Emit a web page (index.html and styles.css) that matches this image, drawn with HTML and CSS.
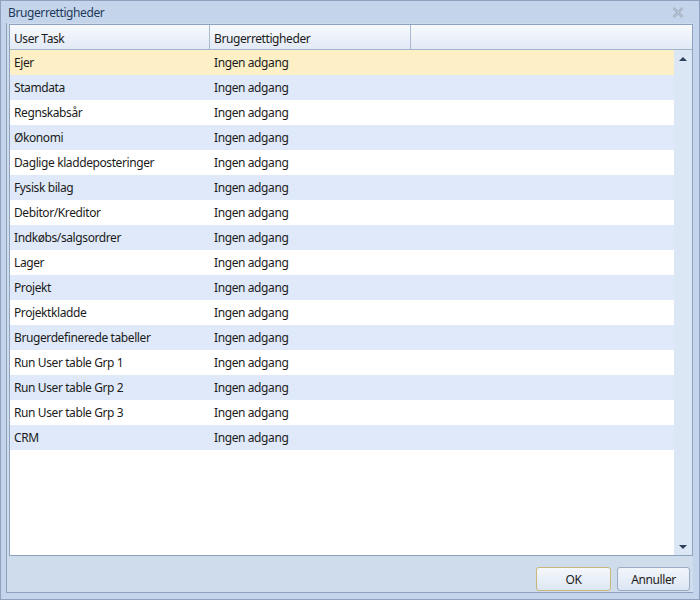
FILE: index.html
```html
<!DOCTYPE html>
<html lang="da">
<head>
  <meta charset="UTF-8" />
  <title>Brugerrettigheder</title>
  <link rel="stylesheet" href="styles.css">
</head>
<body>
  <div class="window">
    <div class="titlebar">
      <span class="title">Brugerrettigheder</span>
      <span class="close">
        <svg width="12" height="11" viewBox="0 0 12 11">
          <path d="M1.5 1 L10.5 10 M10.5 1 L1.5 10" stroke="#8d9bb0" stroke-width="2.2" fill="none"/>
          <path d="M1.5 1 L10.5 10 M10.5 1 L1.5 10" stroke="#e8eef7" stroke-width="0.8" fill="none"/>
        </svg>
      </span>
    </div>

    <div class="panel">
      <div class="grid">
        <div class="grid-head">
          <div class="col c1">User Task</div>
          <div class="col c2">Brugerrettigheder</div>
          <div class="col c3"></div>
        </div>
        <div class="grid-body">
          <div class="rows" id="rows"></div>
          <div class="scrollbar">
            <span class="arrow up"></span>
            <span class="arrow down"></span>
          </div>
        </div>
      </div>

      <div class="buttons">
        <button class="btn default">OK</button>
        <button class="btn">Annuller</button>
      </div>
    </div>
  </div>

  <script>
    var tasks = [
      "Ejer", "Stamdata", "Regnskabsår", "Økonomi", "Daglige kladdeposteringer",
      "Fysisk bilag", "Debitor/Kreditor", "Indkøbs/salgsordrer", "Lager", "Projekt",
      "Projektkladde", "Brugerdefinerede tabeller", "Run User table Grp 1",
      "Run User table Grp 2", "Run User table Grp 3", "CRM"
    ];

    var rows = document.getElementById("rows");
    tasks.forEach(function (name, i) {
      var row = document.createElement("div");
      row.className = "row" + (i === 0 ? " selected" : (i % 2 ? " alt" : ""));
      row.innerHTML = '<div class="cell c1">' + name + '</div><div class="cell c2">Ingen adgang</div>';
      rows.appendChild(row);
    });
  </script>
</body>
</html>
```

FILE: styles.css
```css
* {
  box-sizing: border-box;
}

body {
  margin: 0;
  font-family: "Segoe UI", "Noto Sans", "Open Sans", sans-serif;
  font-size: 12px;
  letter-spacing: -0.4px;
  color: #1b1b1b;
}

.window {
  width: 700px;
  height: 600px;
  background: #c4d5eb;
  border: 1px solid #8ea2bf;
  display: flex;
  flex-direction: column;
}

.titlebar {
  height: 22px;
  display: flex;
  align-items: center;
  justify-content: space-between;
  padding: 0 15px 0 7px;
  color: #1e395b;
}

.close {
  display: flex;
}

.panel {
  flex: 1;
  margin: 0 6px 6px 5px;
  background: #cfdcec;
  border-left: 1px solid #8ea2bf;
  border-bottom: 1px solid #8ea2bf;
  padding: 1px 0 0 2px;
  display: flex;
  flex-direction: column;
}

.grid {
  width: 684px;
  height: 532px;
  border: 1px solid #8ea3c0;
  background: #fff;
  display: flex;
  flex-direction: column;
}

.grid-head {
  height: 25px;
  display: flex;
  background: linear-gradient(#f8fafd, #e2eaf6);
  border-bottom: 1px solid #a2b4cb;
}

.col {
  padding: 5px 4px 0 4px;
  border-right: 1px solid #a9bad0;
}

.col.c1 {
  width: 200px;
}

.col.c2 {
  width: 201px;
}

.col.c3 {
  width: 0;
  border-right: none;
}

.grid-body {
  flex: 1;
  display: flex;
}

.rows {
  flex: 1;
  background: #fff;
}

.row {
  height: 25px;
  display: flex;
  align-items: center;
  background: #fff;
}

.row.alt {
  background: #dfe9f9;
}

.row.selected {
  background: #fdf0c6;
}

.cell {
  padding: 0 4px;
}

.cell.c1 {
  width: 200px;
}

.cell.c2 {
  width: 201px;
}

.scrollbar {
  width: 18px;
  background: #dce7f6;
  display: flex;
  flex-direction: column;
  justify-content: space-between;
  align-items: center;
  padding: 7px 0 6px;
}

.arrow {
  width: 0;
  height: 0;
  border-left: 4px solid transparent;
  border-right: 4px solid transparent;
}

.arrow.up {
  border-bottom: 4px solid #2d3f5a;
}

.arrow.down {
  border-top: 4px solid #2d3f5a;
}

.buttons {
  flex: 1;
  display: flex;
  justify-content: flex-end;
  align-items: flex-end;
  gap: 6px;
  padding: 0 3px 1px 0;
}

.btn {
  height: 24px;
  width: 73px;
  font: inherit;
  letter-spacing: inherit;
  color: #1b1b1b;
  background: linear-gradient(#f2f6fb, #dce6f3);
  border: 1px solid #9aabc3;
  border-radius: 3px;
}

.btn.default {
  width: 75px;
  border-color: #c9b77a;
  background: linear-gradient(#f5f8fc, #dde7f3);
}
```
